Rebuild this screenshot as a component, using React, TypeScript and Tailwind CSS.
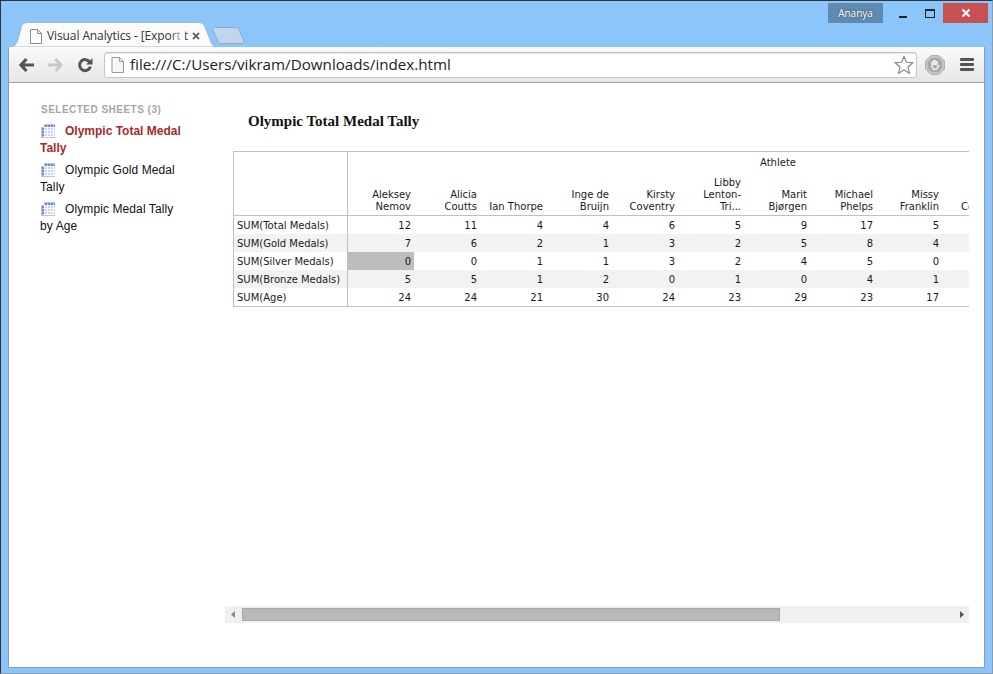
import React from "react";

const names: string[][] = [
  ["Aleksey", "Nemov"],
  ["Alicia", "Coutts"],
  ["Ian Thorpe"],
  ["Inge de", "Bruijn"],
  ["Kirsty", "Coventry"],
  ["Libby", "Lenton-", "Tri..."],
  ["Marit", "Bjørgen"],
  ["Michael", "Phelps"],
  ["Missy", "Franklin"],
  ["Natalie", "Coughlin"],
];

const rows: { label: string; values: number[] }[] = [
  { label: "SUM(Total Medals)", values: [12, 11, 4, 4, 6, 5, 9, 17, 5, 12] },
  { label: "SUM(Gold Medals)", values: [7, 6, 2, 1, 3, 2, 5, 8, 4, 3] },
  { label: "SUM(Silver Medals)", values: [0, 0, 1, 1, 3, 2, 4, 5, 0, 4] },
  { label: "SUM(Bronze Medals)", values: [5, 5, 1, 2, 0, 1, 0, 4, 1, 5] },
  { label: "SUM(Age)", values: [24, 24, 21, 30, 24, 23, 29, 23, 17, 25] },
];

function SheetIcon() {
  return (
    <svg width="14" height="14" viewBox="0 0 14 14" className="inline-block align-[-3px] ml-[1px] mr-[10px]">
      <path d="M3 0 H14 V14 H0 V3 H3 Z" fill="#c6c6c6" />
      <rect x="3" y="3" width="11" height="10" fill="#ffffff" />
      {[4, 7, 10].map((x) => (
        <rect key={`t${x}`} x={x} y="1" width="2" height="2" fill="#5f86f2" />
      ))}
      <rect x="13" y="1" width="1" height="2" fill="#5f86f2" />
      {[4, 7, 10].map((y) => (
        <rect key={`l${y}`} x="1" y={y} width="2" height="2" fill="#5f86f2" />
      ))}
      {[4, 7, 10].map((x) =>
        [4, 7, 10].map((y) => <rect key={`${x}-${y}`} x={x} y={y} width="2" height="2" fill="#c3d3fb" />)
      )}
      {[4, 7, 10].map((y) => (
        <rect key={`r${y}`} x="13" y={y} width="1" height="2" fill="#c3d3fb" />
      ))}
    </svg>
  );
}

function Sheet({ title, active }: { title: string; active?: boolean }) {
  return (
    <div
      className={
        active
          ? "w-[145px] -ml-[1px] text-[12px] leading-[17px] font-bold text-[#a52a2a] mb-[5px]"
          : "w-[145px] -ml-[1px] text-[12px] leading-[17px] tracking-[0.1px] text-[#111] mb-[5px]"
      }
    >
      <SheetIcon />
      {title}
    </div>
  );
}

function Toolbar() {
  return (
    <div className="h-[36px] flex items-center border-b border-[#a3a3a3] rounded-t-[3px] bg-gradient-to-b from-[#fbfbfb] to-[#e6e6e6] shrink-0">
      <svg width="18" height="16" viewBox="0 0 18 16" className="ml-[9px]">
        <path d="M8.5 2 L3 8 L8.5 14 M3.5 8 H16" fill="none" stroke="#555" strokeWidth="3.2" />
      </svg>
      <svg width="18" height="16" viewBox="0 0 18 16" className="ml-[10px]">
        <path d="M9.5 2 L15 8 L9.5 14 M14.5 8 H2" fill="none" stroke="#c8c8c8" strokeWidth="3" />
      </svg>
      <svg width="16" height="16" viewBox="0 0 16 16" className="ml-[13px]">
        <path d="M12.6 5 A5.5 5.5 0 1 0 13.4 9.5" fill="none" stroke="#555" strokeWidth="3" />
        <path d="M15.5 1 V7.5 H9 Z" fill="#555" />
      </svg>
      <div className="ml-[11px] w-[813px] h-[26px] flex items-center bg-white border border-[#c6c6c6] rounded-[3px] shadow-[inset_0_1px_1px_#e4e4e4]">
        <svg width="13" height="16" viewBox="0 0 13 16" className="ml-[6px]">
          <path d="M1 .5 H8.5 L12.5 4.5 V15.5 H1 Z" fill="#f6f6f6" stroke="#9a9a9a" />
          <path d="M8.5 .5 V4.5 H12.5" fill="none" stroke="#9a9a9a" />
        </svg>
        <span className="ml-[6px] font-['Open_Sans',sans-serif] text-[15.2px] text-[#222] leading-none">
          file:///C:/Users/vikram/Downloads/index.html
        </span>
        <svg width="20" height="20" viewBox="0 0 20 20" className="ml-auto mr-[2px]">
          <path
            d="M10 1.5 L12.5 7.3 L18.8 7.8 L14 12 L15.5 18.2 L10 14.9 L4.5 18.2 L6 12 L1.2 7.8 L7.5 7.3 Z"
            fill="#fff"
            stroke="#8a8a8a"
            strokeWidth="1.2"
          />
        </svg>
      </div>
      <svg width="20" height="20" viewBox="0 0 20 20" className="ml-[8px]">
        <path d="M6 .5 H14 L19.5 6 V14 L14 19.5 H6 L.5 14 V6 Z" fill="#c4c4c4" stroke="#b0b0b0" />
        <path d="M3 6.8 L6.8 3 H13.2 L17 6.8 V13.2 L13.2 17 H6.8 L3 13.2 Z" fill="#a8a8a8" />
        <path
          d="M7 6.5 V11 M8.7 5 V10 M10.3 5 V10 M12 6 V10.5 M7 10 C7 13.5 8.5 14.5 10 14.5 C12 14.5 12.5 13 13.8 10"
          fill="none"
          stroke="#ececec"
          strokeWidth="1.6"
        />
      </svg>
      <div className="ml-[15px] w-[14px] flex flex-col gap-[2px]">
        <div className="h-[3px] bg-[#555] rounded-[1px]" />
        <div className="h-[3px] bg-[#555] rounded-[1px]" />
        <div className="h-[3px] bg-[#555] rounded-[1px]" />
      </div>
    </div>
  );
}

function Pivot() {
  return (
    <div className="w-[736px] ml-[8px] mt-[9px] h-[156px] overflow-hidden shrink-0">
      <div className="w-[975px] border border-[#c0c0c0] font-['DejaVu_Sans',sans-serif] text-[10px] text-[#1a1a1a]">
        <div className="flex border-b border-[#c0c0c0] h-[64px]">
          <div className="w-[114px] border-r border-[#c0c0c0] shrink-0" />
          <div className="flex-1 flex flex-col">
            <div className="h-[22px] leading-[22px] w-[860px] text-center">Athlete</div>
            <div className="flex-1 flex items-end">
              {names.map((lines) => (
                <div key={lines.join()} className="w-[66px] shrink-0 pr-[3px] text-right leading-[12px] pb-[2px]">
                  {lines.map((l) => (
                    <div key={l} className="whitespace-nowrap">
                      {l}
                    </div>
                  ))}
                </div>
              ))}
            </div>
          </div>
        </div>
        {rows.map((r, i) => (
          <div key={r.label} className={i % 2 === 1 ? "flex h-[18px] leading-[20px] bg-[#f2f2f2]" : "flex h-[18px] leading-[20px]"}>
            <div className="w-[114px] pl-[3px] border-r border-[#c0c0c0] shrink-0 whitespace-nowrap">{r.label}</div>
            {r.values.map((v, j) => (
              <div
                key={j}
                className={
                  i === 2 && j === 0
                    ? "w-[66px] h-[18px] shrink-0 pr-[3px] text-right bg-[#bdbdbd]"
                    : "w-[66px] h-[18px] shrink-0 pr-[3px] text-right"
                }
              >
                {v}
              </div>
            ))}
          </div>
        ))}
      </div>
    </div>
  );
}

export default function App() {
  return (
    <div className="w-[993px] h-[674px] bg-[#8cc5f9] border border-t-[#2b3640] border-l-[#2b3640] border-r-[#8e9aa5] border-b-[#8e9aa5] flex flex-col overflow-hidden font-['Liberation_Sans',Arial,sans-serif]">
      <div className="h-[21px] shrink-0 flex justify-end pt-[2px] pr-[4px]">
        <div className="w-[55px] h-[20px] bg-[#5f8bb0] text-white text-[10px] leading-[20px] text-center font-['Open_Sans',sans-serif] [text-shadow:0_0_2px_#2c3e50]">
          Ananya
        </div>
        <div className="w-[60px] h-[20px] relative">
          <div className="absolute left-[16px] top-[13px] w-[8px] h-[2px] bg-[#222]" />
          <div className="absolute left-[42px] top-[6px] w-[10px] h-[9px] border border-[#222] border-t-2" />
        </div>
        <div className="w-[45px] h-[20px] bg-[#c75050] flex items-center justify-center text-white">
          <svg width="10" height="10" viewBox="0 0 10 10">
            <path d="M1.5 1.5 L8.5 8.5 M8.5 1.5 L1.5 8.5" stroke="#fff" strokeWidth="2" />
          </svg>
        </div>
      </div>
      <div className="h-[25px] shrink-0 flex items-end pl-[7px] relative">
        <div className="w-[208px] h-[25px] relative shrink-0">
          <svg width="208" height="25" viewBox="0 0 208 25" className="absolute left-0 top-0">
            <path
              d="M1 25 C6 25 9 22 10 17 L13 6 C14 2 16 .5 20 .5 H190 C194 .5 196 2 197 5 L203 20 C204 23 206 25 208 25 Z"
              fill="#fbfbfb"
              stroke="#9fb6cc"
            />
          </svg>
          <div className="absolute left-[22px] top-[5px] flex items-center">
            <svg width="12" height="15" viewBox="0 0 12 15">
              <path d="M.5 .5 H7.5 L11.5 4.5 V14.5 H.5 Z" fill="#fff" stroke="#8f8f8f" />
              <path d="M7.5 .5 V4.5 H11.5" fill="none" stroke="#8f8f8f" />
            </svg>
            <span className="ml-[5px] w-[138px] relative whitespace-nowrap text-[12px] font-['Open_Sans',sans-serif] tracking-[-0.1px] text-[#333]">
              Visual Analytics - [Export t
              <span className="absolute right-0 top-0 bottom-0 w-[14px] bg-gradient-to-r from-transparent to-[#fbfbfb]" />
            </span>
            <svg width="8" height="8" viewBox="0 0 8 8" className="ml-[7px]">
              <path d="M1 1 L7 7 M7 1 L1 7" stroke="#666" strokeWidth="1.8" />
            </svg>
          </div>
        </div>
        <svg width="34" height="17" viewBox="0 0 34 17" className="mb-[3px] -ml-[4px]">
          <path d="M2 .5 H23 C25 .5 26 1 27 3 L32 14 C32.5 15.5 32 16.5 30 16.5 H9 C7 16.5 6.5 15.5 6 14 L1 3 C.5 1.5 1 .5 2 .5 Z" fill="#c2d6ea" stroke="#8fadc9" />
        </svg>
      </div>
      <div className="ml-[7px] mr-[7px] flex-1 flex flex-col border-x border-b border-[#8f9ba6] mb-[5px] bg-white">
        <Toolbar />
        <div className="flex-1 flex">
          <div className="w-[216px] shrink-0 pl-[32px] pt-[21px]">
            <div className="text-[10px] font-bold text-[#a6a6a6] tracking-[0.48px] leading-[12px] mb-[7px]">
              SELECTED SHEETS (3)
            </div>
            <Sheet title="Olympic Total Medal Tally" active />
            <Sheet title="Olympic Gold Medal Tally" />
            <Sheet title="Olympic Medal Tally by Age" />
          </div>
          <div className="flex-1 flex flex-col">
            <div className="pl-[23px] pt-[28px] h-[59px] font-['Liberation_Serif',serif] font-bold text-[15px] leading-[20px] text-[#111] shrink-0">
              Olympic Total Medal Tally
            </div>
            <Pivot />
            <div className="mt-[299px] w-[744px] h-[17px] bg-[#f0f0f0] flex items-center shrink-0">
              <svg width="17" height="17" viewBox="0 0 17 17">
                <path d="M10 5 V12 L6 8.5 Z" fill="#888" />
              </svg>
              <div className="w-[538px] h-[13px] bg-[#b9b9b9] border border-[#a9a9a9]" />
              <svg width="17" height="17" viewBox="0 0 17 17" className="ml-auto">
                <path d="M8 5 V12 L12 8.5 Z" fill="#555" />
              </svg>
            </div>
          </div>
        </div>
      </div>
    </div>
  );
}
